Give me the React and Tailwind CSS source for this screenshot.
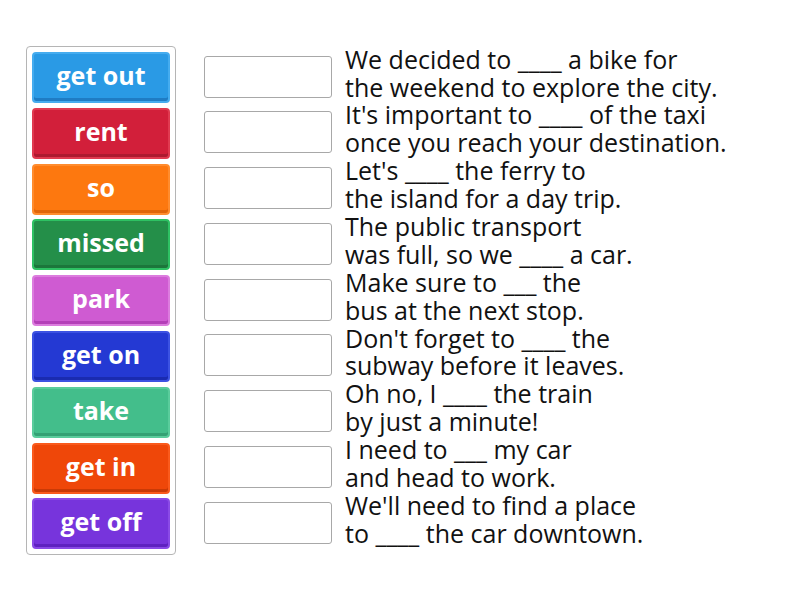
const tiles = [
  { label: 'get out', cls: 'bg-[#2a9ae5] border-[#45acef] shadow-[inset_0_-3px_0_#1f7cc4]' },
  { label: 'rent', cls: 'bg-[#d21f3a] border-[#e03a50] shadow-[inset_0_-3px_0_#ad1a30]' },
  { label: 'so', cls: 'bg-[#fd780f] border-[#ff8c2e] shadow-[inset_0_-3px_0_#e0650a]' },
  { label: 'missed', cls: 'bg-[#248f49] border-[#2ec163] shadow-[inset_0_-3px_0_#1c763b]' },
  { label: 'park', cls: 'bg-[#cf5bd2] border-[#dc7cde] shadow-[inset_0_-3px_0_#b43fb8]' },
  { label: 'get on', cls: 'bg-[#2439d3] border-[#3c52e2] shadow-[inset_0_-3px_0_#1a2bb0]' },
  { label: 'take', cls: 'bg-[#43be8b] border-[#5acc9c] shadow-[inset_0_-3px_0_#34a174]' },
  { label: 'get in', cls: 'bg-[#ef4709] border-[#fa5a1c] shadow-[inset_0_-3px_0_#c93a06]' },
  { label: 'get off', cls: 'bg-[#7734dc] border-[#8a4ae6] shadow-[inset_0_-3px_0_#5f22c0]' },
]

const sentences = [
  ['We decided to ____ a bike for', 'the weekend to explore the city.'],
  ["It's important to ____ of the taxi", 'once you reach your destination.'],
  ["Let's ____ the ferry to", 'the island for a day trip.'],
  ['The public transport', 'was full, so we ____ a car.'],
  ['Make sure to ___ the', 'bus at the next stop.'],
  ["Don't forget to ____ the", 'subway before it leaves.'],
  ['Oh no, I ____ the train', 'by just a minute!'],
  ['I need to ___ my car', 'and head to work.'],
  ["We'll need to find a place", 'to ____ the car downtown.'],
]

export default function App() {
  return (
    <div className="w-[800px] h-[600px] bg-white font-['Open_Sans',sans-serif] flex items-start pt-[46px] pl-[26px]">
      {/* Answer tiles */}
      <div className="w-[150px] border border-[#b5b5b5] rounded-[4px] p-[5px] flex flex-col gap-[4.8px] bg-white">
        {tiles.map((t) => (
          <div
            key={t.label}
            className={`h-[51px] rounded-[4px] border-2 flex items-center justify-center text-white font-bold text-[25px] leading-none pb-[4px] ${t.cls}`}
          >
            {t.label}
          </div>
        ))}
      </div>

      {/* Sentences */}
      <div className="ml-[28px] pt-[5px] flex flex-col gap-[4.8px]">
        {sentences.map((s, i) => (
          <div key={i} className="h-[51px] flex items-center">
            <div className="w-[128px] h-[42px] shrink-0 border border-[#a8a8a8] rounded-[3px] bg-white" />
            <div className="ml-[13px] pb-[6px] text-[25px] leading-[27.85px] text-[#111] whitespace-nowrap">
              <div>{s[0]}</div>
              <div>{s[1]}</div>
            </div>
          </div>
        ))}
      </div>
    </div>
  )
}
